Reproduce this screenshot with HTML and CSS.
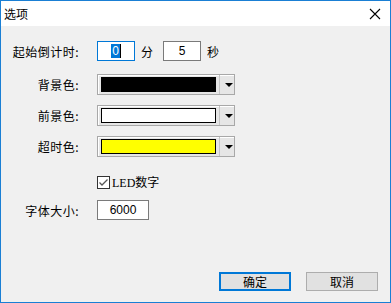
FILE: index.html
```html
<!DOCTYPE html>
<html lang="zh-CN">
<head>
    <meta charset="UTF-8">
    <title>选项</title>
    <link rel="stylesheet" href="styles.css">
</head>
<body>
    <div class="dialog">
        <div class="title-bar">
            <span class="title">选项</span>
            <svg class="close" width="12" height="12" viewBox="0 0 12 12">
                <path d="M1 1 L11 11 M11 1 L1 11" stroke="#000" stroke-width="1.1" fill="none"/>
            </svg>
        </div>
        <div class="content">
            <div class="row row-time">
                <span class="label">起始倒计时:</span>
                <div class="edit focused small"><span class="sel">0</span></div>
                <span class="unit">分</span>
                <div class="edit small">5</div>
                <span class="unit">秒</span>
            </div>

            <div class="row row-color">
                <span class="label">背景色:</span>
                <div class="combo">
                    <div class="swatch" style="background: #000000"></div>
                    <div class="arrow"></div>
                </div>
            </div>
            <div class="row row-color">
                <span class="label">前景色:</span>
                <div class="combo">
                    <div class="swatch" style="background: #ffffff"></div>
                    <div class="arrow"></div>
                </div>
            </div>
            <div class="row row-color">
                <span class="label">超时色:</span>
                <div class="combo">
                    <div class="swatch" style="background: #ffff00"></div>
                    <div class="arrow"></div>
                </div>
            </div>

            <div class="row row-check">
                <span class="label"></span>
                <label class="check">
                    <svg class="box" width="13" height="13" viewBox="0 0 13 13">
                        <rect x="0.5" y="0.5" width="12" height="12" fill="#fff" stroke="#333"/>
                        <path d="M2.5 6.5 L5 9 L10.5 3.5" stroke="#555" stroke-width="1.3" fill="none"/>
                    </svg>
                    <span><span class="led">LED</span>数字</span>
                </label>
            </div>

            <div class="row row-font">
                <span class="label">字体大小:</span>
                <div class="edit wide">6000</div>
            </div>

            <div class="buttons">
                <button class="btn default">确定</button>
                <button class="btn">取消</button>
            </div>
        </div>
    </div>
</body>
</html>
```

FILE: styles.css
```css
* {
    box-sizing: border-box;
}

body {
    margin: 0;
    font-family: "Noto Sans CJK SC", "Liberation Sans", sans-serif;
    font-size: 12px;
    color: #000;
}

.dialog {
    width: 391px;
    height: 303px;
    border: 1px solid #1a7fd4;
    background: #f0f0f0;
    display: flex;
    flex-direction: column;
}

.title-bar {
    height: 25px;
    background: #fff;
    display: flex;
    align-items: center;
    justify-content: space-between;
    padding: 0 9px 0 3px;
}

.title {
    font-size: 12px;
}

.content {
    flex: 1;
    display: flex;
    flex-direction: column;
    padding-top: 15px;
}

.row {
    display: flex;
    align-items: center;
}

.label {
    width: 78px;
    text-align: right;
    margin-right: 18px;
    letter-spacing: 0.5px;
}

.edit {
    height: 20px;
    background: #fff;
    border: 1px solid #7a7a7a;
    display: flex;
    align-items: center;
    justify-content: center;
    font-family: "Liberation Sans", sans-serif;
    font-size: 12px;
}

.edit.focused {
    border-color: #0078d7;
}

.edit.small {
    width: 38px;
}

.edit.wide {
    width: 52px;
}

.sel {
    background: #0078d7;
    color: #fff;
    padding: 0 1px;
    line-height: 14px;
    border-right: 1px solid #000;
}

.unit {
    margin: 0 10px 0 6px;
}

.row-color {
    margin-top: 10px;
}

.row-time + .row-color {
    margin-top: 13px;
}

.combo {
    width: 138px;
    height: 21px;
    border: 1px solid #a8a8a8;
    background: #e6e6e6;
    box-shadow: inset 1px 1px 0 #fff;
    display: flex;
    align-items: center;
    padding: 0 0 0 3px;
}

.swatch {
    width: 115px;
    height: 15px;
    border: 1px solid #000;
}

.arrow {
    flex: 1;
    height: 19px;
    margin-left: 3px;
    border-left: 1px solid #c4c4c4;
    position: relative;
}

.arrow::after {
    content: "";
    position: absolute;
    left: 5px;
    top: 8px;
    border-left: 4px solid transparent;
    border-right: 4px solid transparent;
    border-top: 4px solid #000;
}

.row-check {
    margin-top: 16px;
}

.check {
    display: flex;
    align-items: center;
    gap: 2px;
}

.led {
    font-family: "Liberation Serif", serif;
}

.row-font {
    margin-top: 9px;
}

.buttons {
    margin-top: 52px;
    display: flex;
    justify-content: flex-end;
    gap: 15px;
    padding-right: 12px;
}

.btn {
    width: 72px;
    height: 19px;
    padding: 0;
    background: #e1e1e1;
    border: 1px solid #adadad;
    font-family: "Noto Sans CJK SC", sans-serif;
    font-size: 12px;
    line-height: 15px;
}

.btn.default {
    border: 2px solid #0078d7;
}
```
